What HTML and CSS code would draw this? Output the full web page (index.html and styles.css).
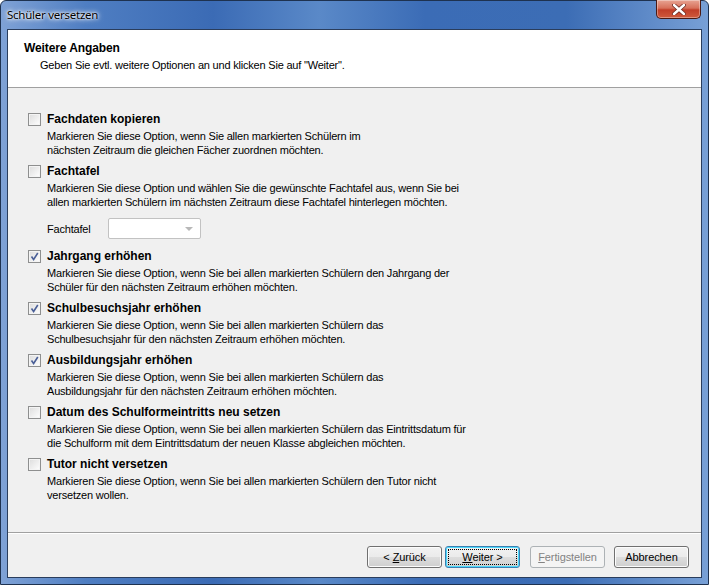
FILE: index.html
```html
<!DOCTYPE html>
<html>
<head>
  <title>Schüler versetzen</title>
  <link rel="stylesheet" href="styles.css">
</head>
<body>
  <div class="window">
    <div class="titlebar">
      <span class="title">Schüler versetzen</span>
      <div class="close-btn">
        <svg width="14" height="11" viewBox="0 0 14 11">
          <path d="M2 1 L12 10 M12 1 L2 10" stroke="#6b2a22" stroke-width="4" stroke-linecap="round"/>
          <path d="M2 1 L12 10 M12 1 L2 10" stroke="#ffffff" stroke-width="2.4" stroke-linecap="round"/>
        </svg>
      </div>
    </div>
    <div class="client">
      <div class="header">
        <div class="header-title">Weitere Angaben</div>
        <div class="header-text">Geben Sie evtl. weitere Optionen an und klicken Sie auf "Weiter".</div>
      </div>

      <div class="options">
        <div class="option">
          <div class="option-label"><span class="checkbox"></span>Fachdaten kopieren</div>
          <div class="option-desc">Markieren Sie diese Option, wenn Sie allen markierten Schülern im<br>nächsten Zeitraum die gleichen Fächer zuordnen möchten.</div>
        </div>
        <div class="option">
          <div class="option-label"><span class="checkbox"></span>Fachtafel</div>
          <div class="option-desc">Markieren Sie diese Option und wählen Sie die gewünschte Fachtafel aus, wenn Sie bei<br>allen markierten Schülern im nächsten Zeitraum diese Fachtafel hinterlegen möchten.</div>
          <div class="combo-row">
            <span class="combo-label">Fachtafel</span>
            <div class="combo"><span class="combo-arrow"></span></div>
          </div>
        </div>
        <div class="option">
          <div class="option-label"><span class="checkbox checked"><svg width="9" height="9" viewBox="0 0 9 9"><path d="M1.5 4.5 L3.6 7.5 L7.8 1" fill="none" stroke="#4a5f97" stroke-width="1.6"/></svg></span>Jahrgang erhöhen</div>
          <div class="option-desc">Markieren Sie diese Option, wenn Sie bei allen markierten Schülern den Jahrgang der<br>Schüler für den nächsten Zeitraum erhöhen möchten.</div>
        </div>
        <div class="option">
          <div class="option-label"><span class="checkbox checked"><svg width="9" height="9" viewBox="0 0 9 9"><path d="M1.5 4.5 L3.6 7.5 L7.8 1" fill="none" stroke="#4a5f97" stroke-width="1.6"/></svg></span>Schulbesuchsjahr erhöhen</div>
          <div class="option-desc">Markieren Sie diese Option, wenn Sie bei allen markierten Schülern das<br>Schulbesuchsjahr für den nächsten Zeitraum erhöhen möchten.</div>
        </div>
        <div class="option">
          <div class="option-label"><span class="checkbox checked"><svg width="9" height="9" viewBox="0 0 9 9"><path d="M1.5 4.5 L3.6 7.5 L7.8 1" fill="none" stroke="#4a5f97" stroke-width="1.6"/></svg></span>Ausbildungsjahr erhöhen</div>
          <div class="option-desc">Markieren Sie diese Option, wenn Sie bei allen markierten Schülern das<br>Ausbildungsjahr für den nächsten Zeitraum erhöhen möchten.</div>
        </div>
        <div class="option">
          <div class="option-label"><span class="checkbox"></span>Datum des Schulformeintritts neu setzen</div>
          <div class="option-desc">Markieren Sie diese Option, wenn Sie bei allen markierten Schülern das Eintrittsdatum für<br>die Schulform mit dem Eintrittsdatum der neuen Klasse abgleichen möchten.</div>
        </div>
        <div class="option">
          <div class="option-label"><span class="checkbox"></span>Tutor nicht versetzen</div>
          <div class="option-desc">Markieren Sie diese Option, wenn Sie bei allen markierten Schülern den Tutor nicht<br>versetzen wollen.</div>
        </div>
      </div>

      <div class="footer">
        <button class="btn">&lt; <u>Z</u>urück</button>
        <button class="btn default"><span class="focus"><u>W</u>eiter &gt;</span></button>
        <button class="btn disabled"><u>F</u>ertigstellen</button>
        <button class="btn">Abbrechen</button>
      </div>
    </div>
  </div>
</body>
</html>
```

FILE: styles.css
```css
* { box-sizing: border-box; }
body {
  margin: 0;
  background: #ffffff;
  font-family: "Liberation Sans", Arial, sans-serif;
  font-size: 11px;
  letter-spacing: -0.2px;
}
.window {
  width: 709px;
  height: 585px;
  display: flex;
  flex-direction: column;
  padding: 0 6px 6px 6px;
  border: 1px solid #1e3250;
  border-radius: 6px 6px 0 0;
  background: linear-gradient(90deg, #7fa2d6 0%, #4f7ec2 12%, #3b6bb5 30%, #5a89c8 45%, #3b6cb6 60%, #3c6db5 80%, #78a0d6 100%);
}
.titlebar {
  height: 28px;
  display: flex;
  align-items: flex-start;
  justify-content: space-between;
}
.title {
  margin-top: 6px;
  font-family: "Noto Sans", "Open Sans", sans-serif;
  font-size: 11.5px;
  letter-spacing: -0.25px;
  color: #000;
  text-shadow: 0 0 6px #ffffff, 0 0 4px #ffffff, 0 0 2px #ffffff;
}
.close-btn {
  width: 45px;
  height: 19px;
  margin-right: 1px;
  margin-top: -1px;
  border: 1px solid #4a1a14;
  border-top: none;
  border-radius: 0 0 5px 5px;
  background: linear-gradient(180deg, #e8a493 0%, #d7705a 45%, #c13e28 55%, #cf5a3c 100%);
  box-shadow: inset 0 0 0 1px rgba(255,255,255,0.35);
  display: flex;
  align-items: center;
  justify-content: center;
}
.client {
  flex: 1;
  display: flex;
  flex-direction: column;
  border: 1px solid #2a3d5c;
  background: #f0f0f0;
  color: #000;
}
.header {
  height: 58px;
  background: #ffffff;
  border-bottom: 1px solid #a0a0a0;
  padding: 11px 0 0 16px;
  line-height: 14px;
}
.header-title { font-weight: bold; font-size: 12px; letter-spacing: -0.1px; }
.header-text { margin-top: 3px; padding-left: 16px; }
.options {
  flex: 1;
  padding: 24px 0 0 20px;
  line-height: 14px;
}
.option { margin-bottom: 7px; }
.option-label {
  display: flex;
  align-items: center;
  font-weight: bold;
  font-size: 12px;
  letter-spacing: 0;
  height: 14px;
}
.option-desc {
  margin-top: 3px;
  padding-left: 19px;
}
.checkbox {
  width: 13px;
  height: 13px;
  margin-right: 6px;
  border: 1px solid #8e8f8f;
  background: linear-gradient(135deg, #dcdcdc 0%, #f4f4f4 70%, #ffffff 100%);
  box-shadow: inset 0 0 0 1px #f4f4f4;
  display: flex;
  align-items: center;
  justify-content: center;
}
.combo-row {
  display: flex;
  align-items: center;
  margin: 9px 0 10px 19px;
}
.combo-label { width: 61px; }
.combo {
  width: 93px;
  height: 21px;
  border: 1px solid #c2c2c2;
  border-radius: 2px;
  background: #ffffff;
  display: flex;
  justify-content: flex-end;
  align-items: center;
  padding-right: 7px;
}
.combo-arrow {
  width: 0;
  height: 0;
  border-left: 4px solid transparent;
  border-right: 4px solid transparent;
  border-top: 4px solid #b8b8b8;
}
.footer {
  height: 45px;
  border-top: 1px solid #a0a0a0;
  box-shadow: inset 0 1px 0 #ffffff;
  display: flex;
  justify-content: flex-end;
  align-items: flex-start;
  padding: 13px 12px 0 0;
}
.btn {
  width: 75px;
  height: 22px;
  margin-left: 3px;
  padding: 0;
  font-family: "Liberation Sans", Arial, sans-serif;
  font-size: 11px;
  letter-spacing: -0.1px;
  color: #000;
  border: 1px solid #707070;
  border-radius: 3px;
  background: linear-gradient(180deg, #f2f2f2 0%, #ebebeb 50%, #dddddd 51%, #cfcfcf 100%);
  box-shadow: inset 0 0 0 1px #fcfcfc;
}
.btn.default {
  border-color: #3c7fb1;
  box-shadow: inset 0 0 0 1px #48d8fb;
  padding: 2px;
}
.btn .focus {
  display: block;
  height: 100%;
  border: 1px dotted #000;
  line-height: 14px;
}
.btn.disabled {
  margin-left: 10px;
  color: #838383;
  border-color: #adb2b5;
  background: #f4f4f4;
  box-shadow: none;
}
.btn:last-child { margin-left: 9px; }
```
